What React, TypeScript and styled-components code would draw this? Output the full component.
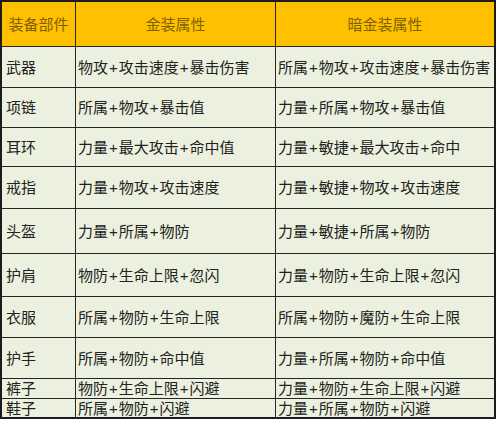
import * as React from 'react';
import styled, { createGlobalStyle } from 'styled-components';

const GlobalStyle = createGlobalStyle`
  html, body {
    margin: 0;
    padding: 0;
    background: #fff;
  }
  body {
    font-family: "Liberation Sans", "Noto Sans CJK SC", sans-serif;
  }
`;

interface IRow {
  part: string;
  gold: string;
  dark: string;
  height: number;
}

const rows: IRow[] = [
  { part: '武器', gold: '物攻+攻击速度+暴击伤害', dark: '所属+物攻+攻击速度+暴击伤害', height: 40 },
  { part: '项链', gold: '所属+物攻+暴击值', dark: '力量+所属+物攻+暴击值', height: 39 },
  { part: '耳环', gold: '力量+最大攻击+命中值', dark: '力量+敏捷+最大攻击+命中', height: 38 },
  { part: '戒指', gold: '力量+物攻+攻击速度', dark: '力量+敏捷+物攻+攻击速度', height: 41 },
  { part: '头盔', gold: '力量+所属+物防', dark: '力量+敏捷+所属+物防', height: 44 },
  { part: '护肩', gold: '物防+生命上限+忽闪', dark: '力量+物防+生命上限+忽闪', height: 42 },
  { part: '衣服', gold: '所属+物防+生命上限', dark: '所属+物防+魔防+生命上限', height: 40 },
  { part: '护手', gold: '所属+物防+命中值', dark: '力量+所属+物防+命中值', height: 40 },
  { part: '裤子', gold: '物防+生命上限+闪避', dark: '力量+物防+生命上限+闪避', height: 19 },
  { part: '鞋子', gold: '所属+物防+闪避', dark: '力量+所属+物防+闪避', height: 18 },
];

const HEADER_HEIGHT = 44;

const Grid = styled.div<{ $rows: string }>`
  display: grid;
  grid-template-columns: 73px 199px 218px;
  grid-template-rows: ${props => props.$rows};
  gap: 1px;
  width: 492px;
  border: 2px solid #1c1c1c;
  background: #262626;
`;

const HeadCell = styled.div`
  display: flex;
  align-items: center;
  justify-content: center;
  background: #ffc000;
  color: #7f6000;
  font-size: 15px;
  line-height: 1;
`;

const Cell = styled.div`
  display: flex;
  align-items: center;
  padding-left: 2px;
  background: #ebf1de;
  color: #222;
  font-size: 15px;
  line-height: 1;
  white-space: nowrap;
  overflow: hidden;
`;

const PartCell = styled(Cell)`
  padding-left: 4px;
`;

const Plus = styled.span`
  margin: 0 1px;
`;

const Attrs = ({ text }: { text: string }) => {
  const parts = text.split('+');
  return (
    <>
      {parts.map((p, i) => (
        <React.Fragment key={i}>
          {i > 0 && <Plus>+</Plus>}
          {p}
        </React.Fragment>
      ))}
    </>
  );
};

export default function App() {
  const template = [HEADER_HEIGHT, ...rows.map(r => r.height)]
    .map(h => `${h}px`)
    .join(' ');

  return (
    <>
      <GlobalStyle />
      <Grid $rows={template}>
        <HeadCell>装备部件</HeadCell>
        <HeadCell>金装属性</HeadCell>
        <HeadCell>暗金装属性</HeadCell>
        {rows.map(row => (
          <React.Fragment key={row.part}>
            <PartCell>{row.part}</PartCell>
            <Cell>
              <Attrs text={row.gold} />
            </Cell>
            <Cell>
              <Attrs text={row.dark} />
            </Cell>
          </React.Fragment>
        ))}
      </Grid>
    </>
  );
}
